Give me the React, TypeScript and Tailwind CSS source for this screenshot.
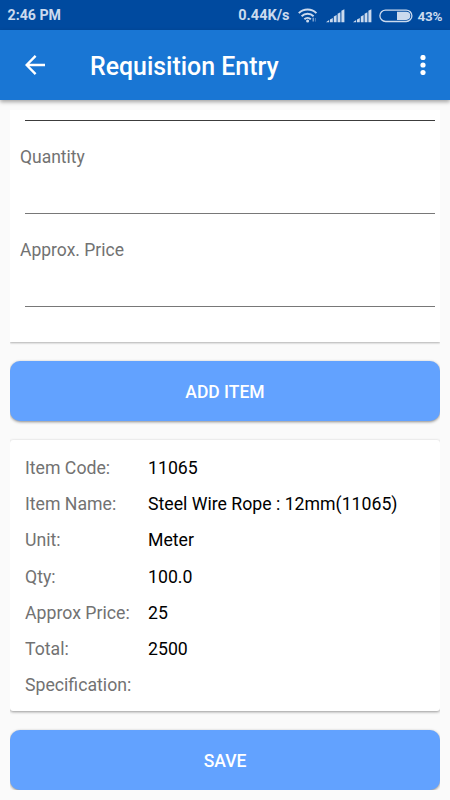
const items = [
    { label: "Item Code:", value: "11065" },
    { label: "Item Name:", value: "Steel Wire Rope : 12mm(11065)" },
    { label: "Unit:", value: "Meter" },
    { label: "Qty:", value: "100.0" },
    { label: "Approx Price:", value: "25" },
    { label: "Total:", value: "2500" },
    { label: "Specification:", value: "" },
];

const WifiIcon = () => (
    <svg width="20" height="15" viewBox="0 0 20 15" fill="none" stroke="#cbdaee" strokeWidth="2">
        <path d="M0.8 5.1a12.6 12.6 0 0 1 17.6 0" />
        <path d="M3.6 8.3a8.6 8.6 0 0 1 12 0" />
        <path d="M6.4 11.2a4.7 4.7 0 0 1 6.4 0" />
        <circle cx="9.6" cy="13" r="1.5" fill="#cbdaee" stroke="none" />
        <path d="M15.2 9.8v3.8" strokeWidth="1.2" stroke="#9db9de" />
        <path d="M17.4 10v3.6" strokeWidth="1" stroke="#4f80bd" />
    </svg>
);

// five bars with slanted tops
const SignalIcon = () => (
    <svg width="19" height="14" viewBox="0 0 19 14" fill="#cbdaee">
        <path d="M0 13.2l3.1-2.2v2.2z" />
        <path d="M4 10.5l2.8-1.6v4.3H4z" />
        <path d="M7.8 7.6l2.8-1.6v7.2H7.8z" />
        <path d="M11.6 4.8l2.8-1.6v10h-2.8z" />
        <path d="M15.4 1.8l3-1.5v12.9h-3z" />
    </svg>
);

const BatteryIcon = () => (
    <svg width="34" height="14" viewBox="0 0 34 14" fill="none">
        <rect x="0.9" y="1.1" width="32" height="11.4" rx="5.7" stroke="#cbdaee" strokeWidth="1.3" />
        <path d="M18 2.7h9.2a4.1 4.1 0 0 1 0 8.2H18z" fill="#cbdaee" />
    </svg>
);

const StatusBar = () => (
    <div className="flex h-[30px] shrink-0 items-center bg-[#004a9f] pr-[8px] pl-[7.5px] text-[14.2px] font-bold text-[#cbdaee]">
        <span className="mt-[2px] w-[54px] whitespace-nowrap">2:46 PM</span>
        <span className="mt-[2px] mr-[8px] ml-auto whitespace-nowrap text-[14.5px]">0.44K/s</span>
        <WifiIcon />
        <span className="mt-px ml-[8px]">
            <SignalIcon />
        </span>
        <span className="mt-px ml-[8px]">
            <SignalIcon />
        </span>
        <span className="mt-px ml-[7px]">
            <BatteryIcon />
        </span>
        <span className="mt-[2px] ml-[5px] w-[24.5px] text-[13.5px] tracking-[-0.2px]">43%</span>
    </div>
);

const AppBar = () => (
    <header className="z-10 flex h-[70px] shrink-0 items-center bg-[#1976d4] pr-[24.5px] pl-[25px] shadow-[0_2px_4px_rgba(0,0,0,0.35)]">
        <svg width="21" height="20" viewBox="0 0 21 20" fill="none" stroke="#fff" strokeWidth="2.4">
            <path d="M20 10H2.2M10.6 0.9L1.6 10l9 9.1" />
        </svg>
        <h1 className="mt-[3px] ml-[44px] text-[24.9px] font-medium text-white">Requisition Entry</h1>
        <svg className="ml-auto" width="6" height="20" viewBox="0 0 6 20" fill="#fff">
            <circle cx="3" cy="2.5" r="2.6" />
            <circle cx="3" cy="10" r="2.6" />
            <circle cx="3" cy="17.5" r="2.6" />
        </svg>
    </header>
);

const Field = ({ label }: { label: string }) => (
    <div className="h-[93px] px-[10px]">
        <label className="block pt-[22px] text-[17.5px] leading-[28px] text-[#727272]">{label}</label>
        <input className="mx-[5px] block h-[43px] w-[410px] border-b border-[#787878] outline-none" />
    </div>
);

const Button = ({ children }: { children: string }) => (
    <button className="h-[60px] w-full shrink-0 rounded-[10px] bg-[#62a2ff] pt-[2px] text-[17.5px] font-medium text-white shadow-[0_1px_3px_rgba(0,0,0,0.45)]">
        {children}
    </button>
);

export default function App() {
    return (
        <div className="flex h-[800px] w-[450px] flex-col overflow-hidden bg-[#fafafa] font-[Roboto,sans-serif]">
            <StatusBar />
            <AppBar />
            <main className="m-[10px] flex flex-1 flex-col overflow-hidden">
                <section className="h-[232px] shrink-0 bg-white shadow-[0_1px_2px_rgba(0,0,0,0.3)]">
                    <div className="mx-[15px] h-[11px] w-[410px] border-b border-[#3c3c3c]" />
                    <Field label="Quantity" />
                    <Field label="Approx. Price" />
                </section>
                <div className="h-[19px] shrink-0" />
                <Button>ADD ITEM</Button>
                <section className="my-[19px] h-[271px] shrink-0 rounded-[3px] bg-white pt-[10px] pl-[15px] shadow-[0_1px_3px_rgba(0,0,0,0.4)]">
                    {items.map((item) => (
                        <div key={item.label} className="flex h-[36.2px] items-center text-[17.7px] leading-[20px]">
                            <span className="w-[123px] text-[#727272]">{item.label}</span>
                            <span className="text-black">{item.value}</span>
                        </div>
                    ))}
                </section>
                <Button>SAVE</Button>
            </main>
        </div>
    );
}
